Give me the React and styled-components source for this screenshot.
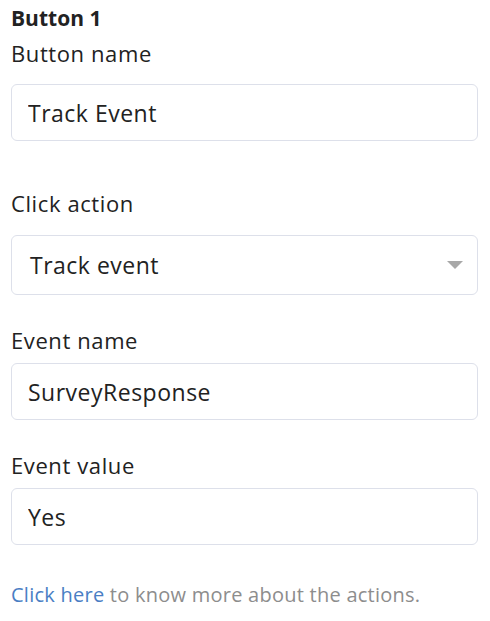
import React from 'react';
import styled, { createGlobalStyle } from 'styled-components';

const GlobalStyle = createGlobalStyle`
  body {
    margin: 0;
    background: #fff;
    font-family: "Open Sans", "Noto Sans", sans-serif;
    color: #222;
  }
`;

function App() {
  return (
    <>
      <GlobalStyle />
      <Panel>
        <Title>Button 1</Title>
        <Field $top={5} $gap={16}>
          <Label>Button name</Label>
          <TextInput defaultValue="Track Event" />
        </Field>
        <Field $top={47} $gap={17}>
          <Label>Click action</Label>
          <SelectBox>
            <span>Track event</span>
            <Caret />
          </SelectBox>
        </Field>
        <Field $top={30} $gap={8}>
          <Label>Event name</Label>
          <TextInput defaultValue="SurveyResponse" />
        </Field>
        <Field $top={30} $gap={8}>
          <Label>Event value</Label>
          <TextInput defaultValue="Yes" />
        </Field>
        <Footer>
          <a href="#actions">Click here</a> to know more about the actions.
        </Footer>
      </Panel>
    </>
  );
}

export default App;

const Panel = styled.div`
  display: flex;
  flex-direction: column;
  padding: 3px 12px 0 11px;
`;

const Title = styled.h3`
  margin: 0;
  font-size: 21px;
  font-weight: 700;
  line-height: 30px;
  color: #222;
`;

const Field = styled.div`
  display: flex;
  flex-direction: column;
  gap: ${p => p.$gap}px;
  margin-top: ${p => p.$top}px;
`;

const Label = styled.label`
  font-size: 22px;
  line-height: 30px;
  letter-spacing: 0.6px;
  color: #222;
`;

const TextInput = styled.input`
  box-sizing: border-box;
  width: 100%;
  height: 57px;
  padding: 0 16px;
  border: 1px solid #dde0ea;
  border-radius: 6px;
  font-family: inherit;
  font-size: 23px;
  letter-spacing: 0.5px;
  color: #222;
  outline: none;
`;

const SelectBox = styled.div`
  box-sizing: border-box;
  display: flex;
  align-items: center;
  justify-content: space-between;
  height: 60px;
  padding: 0 14px 0 18px;
  border: 1px solid #dde0ea;
  border-radius: 6px;
  font-size: 23px;
  letter-spacing: 0.5px;
  color: #222;
`;

const Caret = styled.span`
  width: 0;
  height: 0;
  border-left: 8px solid transparent;
  border-right: 8px solid transparent;
  border-top: 8px solid #a8a8a8;
`;

const Footer = styled.p`
  margin: 38px 0 0;
  font-size: 20px;
  line-height: 24px;
  letter-spacing: 0.25px;
  color: #8d8d8d;

  a {
    color: #4a7ec4;
    text-decoration: none;
  }
`;
